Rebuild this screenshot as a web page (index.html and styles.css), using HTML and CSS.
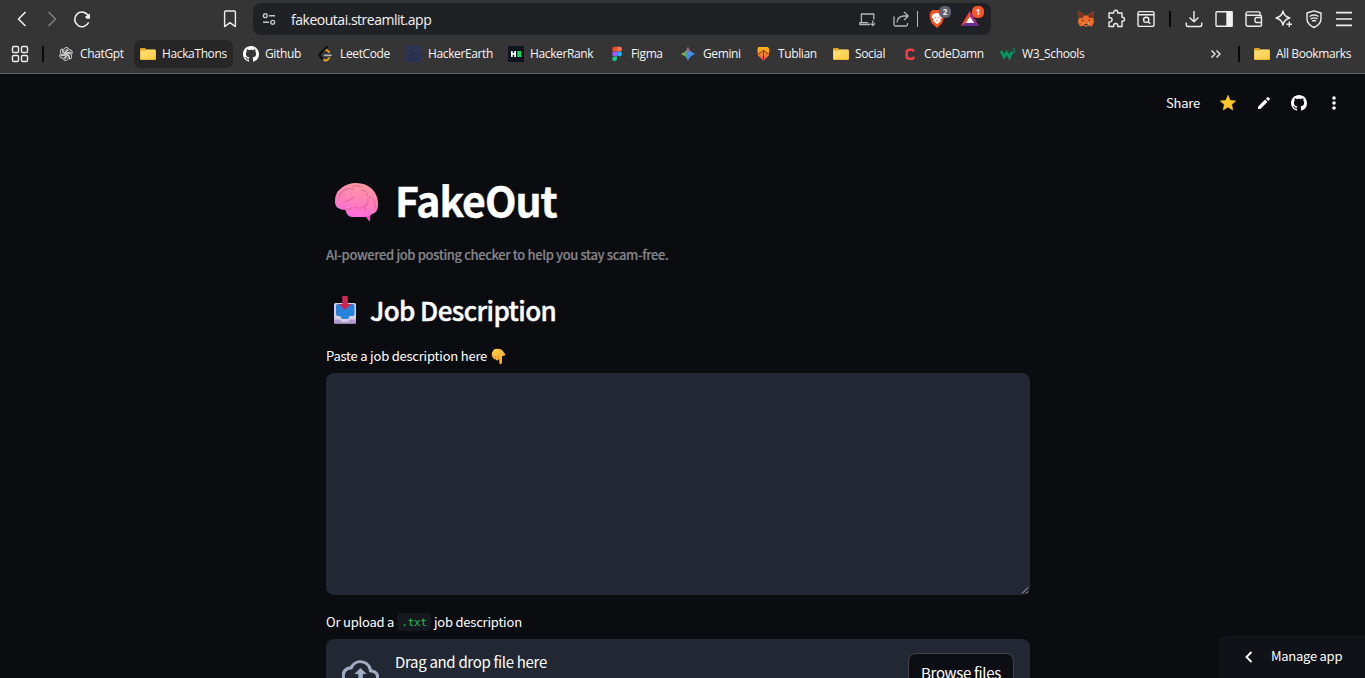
FILE: index.html
```html
<!DOCTYPE html>
<html lang="en">
<head>
<meta charset="utf-8">
<title>FakeOut</title>
<link rel="stylesheet" href="styles.css">
</head>
<body>
<svg class="defs" width="0" height="0" aria-hidden="true">
  <defs>
    <linearGradient id="fold" x1="0" y1="0" x2="1" y2="1"><stop offset="0" stop-color="#ffe383"/><stop offset="1" stop-color="#ffc93c"/></linearGradient>
    <linearGradient id="brainG" x1=".6" y1="0" x2=".35" y2="1"><stop offset="0" stop-color="#ff9da0"/><stop offset=".5" stop-color="#ff80b8"/><stop offset="1" stop-color="#fb6be0"/></linearGradient>
    <linearGradient id="handG" x1="0" y1="0" x2="1" y2="1"><stop offset="0" stop-color="#ffd24a"/><stop offset="1" stop-color="#f7a12f"/></linearGradient>
    <linearGradient id="gemG" x1="0" y1="0" x2="1" y2="0"><stop offset="0" stop-color="#f5bd2d"/><stop offset=".3" stop-color="#54b15c"/><stop offset=".55" stop-color="#418bf0"/><stop offset="1" stop-color="#4b8dff"/></linearGradient>
    <linearGradient id="gemR" x1="0" y1="0" x2="0" y2="1"><stop offset="0" stop-color="#f2473d"/><stop offset=".45" stop-color="#f2473d" stop-opacity="0"/></linearGradient>
    <linearGradient id="tubG" x1="0" y1="0" x2="0" y2="1"><stop offset="0" stop-color="#ffb61b"/><stop offset=".5" stop-color="#f98a21"/><stop offset="1" stop-color="#ee264b"/></linearGradient>
    <symbol id="folder" viewBox="0 0 16 16"><path d="M0 3.200Q0 2 1.200 2H5l1.700 1.700h8.100q1.200 0 1.200 1.200v8q0 1.100-1.200 1.100H1.200Q0 14 0 12.900z" fill="#e5a51c"/><path d="M.4 4.500h5.200l1.400-1h8q.7 0 .7.8v8.300q0 .8-.8.8H1.200q-.8 0-.8-.8z" fill="url(#fold)"/></symbol>
    <symbol id="octo" viewBox="0 0 16 16"><path fill="#fff" d="M8 0C3.58 0 0 3.58 0 8c0 3.54 2.29 6.53 5.47 7.59.4.07.55-.17.55-.38 0-.19-.01-.82-.01-1.49-2.01.37-2.53-.49-2.69-.94-.09-.23-.48-.94-.82-1.13-.28-.15-.68-.52-.01-.53.63-.01 1.08.58 1.23.82.72 1.21 1.87.87 2.33.66.07-.52.28-.87.51-1.07-1.78-.2-3.64-.89-3.64-3.95 0-.87.31-1.59.82-2.15-.08-.2-.36-1.02.08-2.12 0 0 .67-.21 2.2.82.64-.18 1.32-.27 2-.27.68 0 1.36.09 2 .27 1.53-1.04 2.2-.82 2.2-.82.44 1.1.16 1.92.08 2.12.51.56.82 1.27.82 2.15 0 3.07-1.87 3.75-3.65 3.95.29.25.54.73.54 1.48 0 1.07-.01 1.93-.01 2.2 0 .21.15.46.55.38A8.013 8.013 0 0 0 16 8c0-4.42-3.58-8-8-8z"/></symbol>
  </defs>
</svg>

<header class="browser">
  <div class="toolbar">
    <nav class="nav-buttons">
      <svg class="ic20 strong" viewBox="0 0 20 20"><path d="M13.500 3 6.500 10l7 7"/></svg>
      <svg class="ic20 dim" viewBox="0 0 20 20"><path d="M6.500 3l7 7-7 7"/></svg>
      <svg class="ic20 strong" viewBox="0 0 20 20"><path d="M16.700 13.300A7.300 7.300 0 1 1 16.200 6.500"/><path d="M18 4.500v5.300h-3.500l-1.500-2z" fill="#eee" stroke="none"/></svg>
    </nav>
    <svg class="ic20 bookmark" viewBox="0 0 20 20"><path d="M4.600 3q0-1 1-1h8.800q1 0 1 1v14.600L10 13.600 4.600 17.600z"/></svg>
    <div class="urlbar">
      <svg class="ic16 tune" viewBox="0 0 16 16"><circle cx="4.300" cy="4.700" r="1.900"/><path d="M8 4.700h6M2 11.300h6"/><circle cx="11.700" cy="11.300" r="1.900"/></svg>
      <span class="url">fakeoutai.streamlit.app</span>
      <svg class="ic18 soft laptop" viewBox="0 0 18 18"><path d="M12 14.500H1.800v-1.800h8.500M3.400 12.500V4h12.400v5.500M14.800 10.500v5M12.500 13.400l2.300 2.200 2.300-2.200"/></svg>
      <svg class="ic18 soft share-ic" viewBox="0 0 18 18"><path d="M2 6.500V14.500q0 1.500 1.500 1.500H14q1.500 0 1.500-1.500V13M5 12.500q.5-6 6.500-6.500h4.500M12 2l4.300 4-4.300 4"/></svg>
      <i class="url-divider"></i>
      <div class="shield">
        <svg width="18" height="18" viewBox="0 0 18 18"><path d="M4.500 0h8l3.500 3.500-.5 1.500.5 1-1.700 7L9 18 3.500 13 1.500 6l.6-1-.6-1.500z" fill="#fb5023"/><path d="M5 4 9 3l4 1 1.300 2.800-2 2.700.3 1.800L9 14.300l-3.500-3 .2-1.800-2-2.700z" fill="#fff"/><path d="M6.200 6.500l2 .7-.8 1.100zM11.800 6.500l-2 .7.8 1.100zM9 8.500v1.500l-1 .7L9 11.500l1-.8L9 10z" fill="#fb5023"/></svg>
        <b class="badge grey">2</b>
      </div>
      <div class="bat">
        <svg width="18" height="16" viewBox="0 0 18 16"><path d="M9 0 0 15h18z" fill="#a02a85"/><path d="M9 0 0 15l9-5z" fill="#ff4724"/><path d="M0 15h18l-4.500-3h-9z" fill="#652d91"/><path d="M9 5.500 4.800 12h8.400z" fill="#fff"/></svg>
        <b class="badge red">1</b>
      </div>
    </div>
    <div class="extensions">
      <svg class="ic18" viewBox="0 0 18 18"><g stroke="none"><path d="M1.300 1 8 5.500h2L16.700 1l-.5 7 .9 4-2.100 4.500-4-1L9 17l-2-1.500-4 1L.9 12l.9-4z" fill="#ee6c27"/><path d="M1.300 1 7.500 5.500 5.500 8 2 8zM16.700 1l-6.200 4.500 2 2.500 3.500 0z" fill="#7d3520"/><path d="M5 9.200l2 1.300-1.800.5zM13 9.200l-2 1.300 1.800.5zM7.500 14h3v1.200h-3z" fill="#382f35"/><path d="M6 12l1.500 1.500L6 15zM12 12l-1.500 1.500L12 15z" fill="#c9b6a9"/></g></svg>
      <svg class="ic20" viewBox="0 0 20 20"><path d="M3 4h4.700V3.300a2 2 0 0 1 4 0V4H16v4.300h.5a2 2 0 0 1 0 4H16V17.500h-4.300v-1a2 2 0 0 0-4 0v1H3v-4.600h1a2.100 2.100 0 0 0 0-4.200H3z"/></svg>
      <svg class="ic20" viewBox="0 0 20 20"><rect x="2" y="2.600" width="16" height="14.800" rx="1.500"/><path d="M2 5.700h16M12.200 12.800l2 2"/><circle cx="10.200" cy="10.800" r="2.600"/></svg>
    </div>
    <i class="black-bar"></i>
    <div class="tools">
      <svg class="ic20" viewBox="0 0 20 20"><path d="M10 2v10.500M5.500 8.500l4.500 4.300 4.500-4.300M2.300 13.500v2.200q0 1.800 1.800 1.800h11.800q1.800 0 1.800-1.800v-2.200"/></svg>
      <svg class="ic20" viewBox="0 0 20 20"><rect x="2" y="2.700" width="16" height="14.600" rx="1"/><path d="M13 2.700h5v14.600h-5z" fill="#f1f1f1"/></svg>
      <svg class="ic20" viewBox="0 0 20 20"><path d="M16 5.800V3.900q0-1-1-1H4q-2 0-2 1.800v10.500q0 2 2 2h12q1.500 0 1.500-1.500v-8q0-1.500-1.500-1.500H4q-2 0-2-1.600M17.500 8.500h-5q-1.500 0-1.500 1.500v2q0 1.500 1.500 1.500h5"/></svg>
      <svg class="ic20" viewBox="0 0 20 20"><path d="M9 2q1 5.500 6.800 7Q10 10.500 9 16 8 10.500 2 9q6-1.500 7-7zM15.300 12.500v5.500M12.500 15.300H18"/></svg>
      <svg class="ic20" viewBox="0 0 20 20"><path d="M10 1.800l7 2.200v5.500q0 6-7 9-7-3-7-9V4z"/><path d="M5.500 7.500q4.500-3 9 0M6.500 10q3.500-2.300 7 0M8 12.300q2-1.500 4 0"/></svg>
      <svg class="ic20" viewBox="0 0 20 20"><path d="M2 3.700h16M2 10h16M2 16.300h16" stroke-width="1.700"/></svg>
    </div>
  </div>

  <div class="bookmarks">
    <svg class="ic20 apps" viewBox="0 0 20 20"><rect x="2.500" y="2.500" width="6" height="6" rx="1.200"/><rect x="11.500" y="2.500" width="6" height="6" rx="1.200"/><rect x="2.500" y="11.500" width="6" height="6" rx="1.200"/><rect x="11.500" y="11.500" width="6" height="6" rx="1.200"/></svg>
    <i class="black-bar"></i>
    <div class="bm-list">
      <a class="bm"><svg viewBox="-.5 -.5 17 17"><g fill="none" stroke="#d6d6d6" stroke-width="1"><path id="petal" d="M8 5.600 5.600 7V3.900a2.900 2.900 0 0 1 5.100-1.800L8 3.700v4.200"/><use href="#petal" transform="rotate(60 8 8)"/><use href="#petal" transform="rotate(120 8 8)"/><use href="#petal" transform="rotate(180 8 8)"/><use href="#petal" transform="rotate(240 8 8)"/><use href="#petal" transform="rotate(300 8 8)"/></g></svg><span>ChatGpt</span></a>
      <a class="bm active"><svg><use href="#folder"/></svg><span>HackaThons</span></a>
      <a class="bm"><svg><use href="#octo"/></svg><span>Github</span></a>
      <a class="bm"><svg viewBox="0 0 16 16" fill="none" stroke-linecap="round" stroke-width="1.800"><path d="M5 4.700q2.500-1.800 4.200-.3l2 1.800" stroke="#f3a21b"/><path d="M4.500 12.800q2.800 2.700 5 1l1.700-1.700" stroke="#f3a21b"/><path d="M9 1 2.300 7.300q-1.500 1.700 0 3.500l2.200 2.400" stroke="#0d0d0d" stroke-width="2"/><path d="M6.500 9.300h6.500" stroke="#b5b5b5"/></svg><span>LeetCode</span></a>
      <a class="bm earth"><svg viewBox="0 0 16 16"><path d="M0 0h16v16H0z" fill="#2c3454"/><path d="M5.500 3v10M5.500 8q5-2.500 5 1v4M3.500 3h2M3.500 13h4M9 13h3.500" fill="none" stroke="#252d4e" stroke-width="1.500"/></svg><span>HackerEarth</span></a>
      <a class="bm"><svg viewBox="0 0 16 16"><path d="M0 0h16v16H0z" fill="#0d141e"/><path d="M3 5h1.700v2h1.500V5H8v6H6.200V8.800H4.700V11H3z" fill="#fff"/><path d="M9.300 5h3.700v6H9.300z" fill="#05e260"/></svg><span>HackerRank</span></a>
      <a class="bm"><svg viewBox="0 0 16 16"><path d="M8 .8H5.500a2.400 2.400 0 0 0 0 4.800H8z" fill="#f24e1e"/><path d="M8 .8h2.500a2.400 2.400 0 0 1 0 4.800H8z" fill="#ff7262"/><path d="M8 5.600H5.500a2.400 2.400 0 0 0 0 4.800H8z" fill="#a259ff"/><circle cx="10.500" cy="8" r="2.400" fill="#1abcfe"/><path d="M8 10.400H5.500a2.400 2.400 0 1 0 2.500 2.400z" fill="#0acf83"/></svg><span>Figma</span></a>
      <a class="bm"><svg viewBox="0 0 16 16"><path d="M7 .8Q8.500 6.200 14.200 8 8.500 9.800 7 15.200 5.500 9.800-.2 8 5.500 6.200 7 .8z" fill="url(#gemG)"/><path d="M7 .8Q8.500 6.200 14.200 8 8.500 9.800 7 15.200 5.500 9.800-.2 8 5.500 6.200 7 .8z" fill="url(#gemR)"/></svg><span>Gemini</span></a>
      <a class="bm"><svg viewBox="0 0 16 16"><path d="M2.500 1h9.500l1.500 2.500-.7 6L7.500 15 2 9.500l-.7-6z" fill="url(#tubG)"/><path d="M7.500 4V13.500M2.500 8.300 7.500 4.500l5 3.800" fill="none" stroke="#6b351e" stroke-width="1"/></svg><span>Tublian</span></a>
      <a class="bm"><svg><use href="#folder"/></svg><span>Social</span></a>
      <a class="bm"><svg viewBox="0 0 16 16"><path d="M11.300 5.600V4.800Q11 3.700 9.500 3.700H8Q4.700 3.700 4.700 6.200v4Q4.700 12.800 8 12.800h1.500q2 0 2-2.100" fill="none" stroke="#f43f46" stroke-width="2.500"/></svg><span>CodeDamn</span></a>
      <a class="bm"><svg viewBox="0 0 16 16" fill="none" stroke="#059862"><path d="M1 5l3 6 2.500-4.500L9.500 11.500l2.500-6" stroke-width="2.600"/><path d="M12.500 3h2.500l-1.300 1.700q2 .3 1 1.800-.8.700-2 .2" stroke-width=".9"/></svg><span>W3_Schools</span></a>
    </div>
    <svg class="ic16 more" viewBox="0 0 16 16"><path d="M3.500 4.500 7 8 3.500 11.500M8.500 4.500 12 8l-3.500 3.500"/></svg>
    <i class="black-bar"></i>
    <a class="bm all"><svg><use href="#folder"/></svg><span>All Bookmarks</span></a>
  </div>
</header>

<main class="app">
  <div class="app-actions">
    <span>Share</span>
    <svg width="18" height="18" viewBox="0 0 18 18"><path d="M9 1.300l2.200 5.100 5.500.5-4.100 3.700 1.200 5.400L9 13.100 4.200 16l1.200-5.400L1.300 6.900l5.500-.5z" fill="#ffc928" stroke="#ffc928" stroke-width=".6" stroke-linejoin="round"/></svg>
    <svg width="18" height="18" viewBox="0 0 18 18"><path d="M3 12.700V15h2.300l7.100-7.100-2.300-2.300zM10.900 4.800l2.300 2.300 1.500-1.500q.5-.5 0-1l-1.300-1.300q-.5-.5-1 0z" fill="#fff"/></svg>
    <svg width="16" height="16"><use href="#octo"/></svg>
    <svg class="dots" width="18" height="18" viewBox="0 0 18 18" fill="#fff"><circle cx="9" cy="4" r="1.800"/><circle cx="9" cy="9" r="1.800"/><circle cx="9" cy="14" r="1.800"/></svg>
  </div>

  <section class="column">
    <h1><svg class="brain" width="46" height="42" viewBox="0 0 46 42"><path d="M28 33l4 2 3 4q1 .6 1-.5l.5-7z" fill="#fb4cc8"/><path d="M1 21Q0 11 8 5.500 14 1 22 1q10 0 16 6 6 6 6 15t-6 10q-3 3-7 3H18q-5 0-6.500-7Q2 28 1 21z" fill="url(#brainG)"/><g fill="none" stroke="#dd5f8f" stroke-opacity=".75" stroke-width="1.100" stroke-linecap="round"><path d="M5 15q1-6 8-8 4-1 6 0M18 4q5-1 8 1M10 20q7-1 9-5M27 8q5 0 6 4 0 3 5 4M20 25q6 2 10 0 5-3 4-8M39 17q3 3 2 9M12 27q4 0 6-1M29 25q3 2 3 4"/></g></svg><span>FakeOut</span></h1>
    <p class="tagline">AI-powered job posting checker to help you stay scam-free.</p>
    <h2><svg width="28" height="30" viewBox="0 0 28 30"><rect x="3" y="7" width="22" height="20.500" rx="1.500" fill="#d6cee5"/><path d="M3 23.500h6l2 2.500h6l2-2.500h6v4H3z" fill="#b29ace"/><path d="M7 8h14.500q2 0 2 2v8q0 2-2 2h-2.500l-2 3h-6L9 20H7q-2 0-2-2v-8q0-2 2-2z" fill="#2783d9"/><path d="M11.300 0h5.400v8h3.500L14 14 7.800 8h3.500z" fill="#cf2554"/></svg><span>Job Description</span></h2>
    <div class="label first"><span>Paste a job description here</span><svg width="16" height="17" viewBox="0 0 16 17"><path d="M3 1.500Q7 0 11 2l3.500 4.500q-.5 1.200-2 1.300L11 8.500v6.100q0 1.600-1.300 1.600t-1.400-1.600v-3H7.100q-.2 1-1.300.8T4.400 11q-1.200.5-1.700-.4T1.500 9Q.2 8 1 4.500z" fill="url(#handG)"/><path d="M4.400 10.500 4.700 8M7 11l.4-3M2 8.500l.5-2" stroke="#cf7425" stroke-width=".7"/></svg></div>
    <div class="textarea"><svg width="10" height="10" viewBox="0 0 10 10"><path d="M2 8.500 8 2.500M6.300 8.500 8.300 6.500" stroke="#b9bcc0" stroke-width="1"/></svg></div>
    <div class="label second"><span>Or upload a</span><code>.txt</code><span>job description</span></div>
    <div class="uploader">
      <svg class="cloud" width="37" height="37" viewBox="0 0 24 24"><path d="M19.400 10A7.500 7.500 0 0 0 12 4C9.100 4 6.600 5.600 5.400 8A6 6 0 0 0 6 20h13a5 5 0 0 0 .4-10zM19 18H6a4 4 0 0 1-.4-8l1-.1.500-1a5.500 5.500 0 0 1 10.300 1.500l.3 1.500 1.500.1A3 3 0 0 1 19 18zM8 13h2.600v3h2.900v-3H16l-4-4z" fill="#a3acc2"/></svg>
      <span class="drag">Drag and drop file here</span>
      <button class="browse">Browse files</button>
    </div>
  </section>
  <div class="manage"><svg width="14" height="16" viewBox="0 0 14 16"><path d="M9.500 3 4.500 8l5 5" fill="none" stroke="#fff" stroke-width="1.900"/></svg><span>Manage app</span></div>
</main>
</body>
</html>
```
FILE: styles.css
```css
* { box-sizing: border-box; }
body { margin: 0; height: 678px; overflow: hidden; background: #0b0c10; color: #fff; }
.defs { position: absolute; }
svg { display: block; flex: none; }

/* Browser chrome */
.browser { height: 74px; background: #353535; border-bottom: 1px solid #656565; font-family: "Open Sans", "Noto Sans", sans-serif; color: #f5f5f5; }
.toolbar { display: flex; align-items: center; height: 38px; padding-left: 12px; }
.ic20, .ic18, .ic16 { fill: none; stroke: #ededed; stroke-width: 1.4; stroke-linejoin: round; }
.ic20 { width: 20px; height: 20px; }
.ic18 { width: 18px; height: 18px; }
.ic16 { width: 16px; height: 16px; }
.strong { stroke-width: 1.6; }
.dim { stroke: #858585; }
.soft { stroke: #b5b5b5; stroke-width: 1.3; }
.nav-buttons { display: flex; gap: 10px; }
.bookmark { margin-left: 128px; }
.urlbar { display: flex; align-items: center; width: 738px; height: 32px; margin-left: 13px; padding-left: 8px; border-radius: 8px; background: #202124; }
.tune { stroke: #c5c5c5; }
.url { width: 140px; margin-left: 14px; font-size: 14px; letter-spacing: -0.48px; white-space: nowrap; }
.laptop { margin-left: 427px; }
.share-ic { margin-left: 16px; }
.url-divider { width: 1px; height: 16px; margin-left: 7px; background: #b5b5b5; }
.shield { position: relative; margin-left: 10px; }
.bat { position: relative; margin-left: 15px; }
.badge { position: absolute; top: -4px; left: 11px; width: 12px; height: 12px; border-radius: 5px; font: 700 8px/12px "Open Sans", sans-serif; text-align: center; }
.bat .badge { left: 11px; top: -5px; }
.grey { background: #5d6170; }
.red { background: #fb542b; }
.extensions { display: flex; align-items: center; gap: 10px; margin-left: 86px; }
.extensions .ic18 { margin-right: 1px; }
.black-bar { width: 2px; height: 16px; background: #080808; }
.toolbar > .black-bar { margin-left: 13px; }
.tools { display: flex; gap: 10px; margin-left: 13px; }

.bookmarks { display: flex; align-items: center; height: 32px; padding-left: 10px; }
.bookmarks > .black-bar { margin-left: 12px; }
.bm-list { display: grid; grid-template-columns: 82px 103px 75px 88px 102px 101px 72px 75px 77px 69px 98px 90px; margin-left: 14px; width: 1032px; flex: none; }
.bm { display: flex; align-items: center; gap: 6px; height: 28px; font-size: 12px; letter-spacing: -0.37px; white-space: nowrap; }
.bm svg { width: 16px; height: 16px; }
.bm span { padding-bottom: 2px; }
.active { width: 99px; margin-left: -6px; padding-left: 6px; border-radius: 7px; background: #262626; }
.bookmarks > .more { margin-left: 118px; }
.bookmarks .more + .black-bar { margin-left: 14px; }
.all { margin-left: 14px; }

/* Application */
.app { position: relative; height: 604px; overflow: hidden; font-family: "Source Sans Pro", "Noto Sans CJK SC", sans-serif; }
.app-actions { display: flex; align-items: center; justify-content: flex-end; gap: 18px; height: 58px; padding-right: 22px; font-size: 13px; letter-spacing: -0.2px; }
.app-actions span { padding-bottom: 2px; margin-right: 1px; }
.column { width: 704px; margin: 0 auto 0 326px; }
h1, h2, p { margin: 0; }
h1 { display: flex; align-items: center; height: 60px; margin-top: 41px; padding-left: 8px; font-size: 41px; font-weight: 700; -webkit-text-stroke: 0.4px #fff; }
h1 span { margin-left: 15px; padding-bottom: 8px; letter-spacing: -1px; }
.tagline { height: 22px; margin-top: 11px; color: #85868a; font-size: 13px; line-height: 22px; font-weight: 500; letter-spacing: -0.38px; white-space: nowrap; -webkit-text-stroke: 0.15px #85868a; }
h2 { display: flex; align-items: center; height: 40px; margin-top: 25px; padding-left: 5px; font-size: 26px; font-weight: 500; -webkit-text-stroke: 0.4px #fff; }
h2 span { margin-left: 11px; padding-bottom: 3px; letter-spacing: -0.6px; }
.label { display: flex; align-items: center; height: 20px; font-size: 13px; letter-spacing: -0.21px; white-space: nowrap; }
.label span { padding-bottom: 2px; }
.first { gap: 4px; margin-top: 15px; }
.textarea { display: flex; align-items: flex-end; justify-content: flex-end; height: 222px; margin-top: 7px; border-radius: 8px; background: #212833; }
.second { margin-top: 17px; }
code { height: 18px; margin: 0 3px; padding: 0 4px; border-radius: 4px; background: #15191f; color: #21c354; font: 11px/19px "DejaVu Sans Mono", monospace; letter-spacing: -0.2px; }
.uploader { display: flex; align-items: flex-start; height: 76px; margin-top: 7px; padding: 14px 16px; border-radius: 8px; background: #212833; font-size: 15px; letter-spacing: -0.32px; }
.cloud { margin-top: 1px; }
.drag { margin-left: 16px; line-height: 18px; }
.browse { width: 106px; height: 40px; margin-left: auto; border: 1px solid #424249; border-radius: 8px; background: #0d0e13; color: #fff; font: 15px "Noto Sans CJK SC", sans-serif; letter-spacing: -0.33px; white-space: nowrap; padding: 0 0 2px; }
.manage { position: absolute; right: 0; bottom: 0; display: flex; align-items: center; width: 146px; height: 43px; padding-left: 23px; border-radius: 8px 0 0; background: #0f1218; font-size: 13px; letter-spacing: -0.26px; }
.manage span { margin-left: 15px; padding-bottom: 2px; }
```
